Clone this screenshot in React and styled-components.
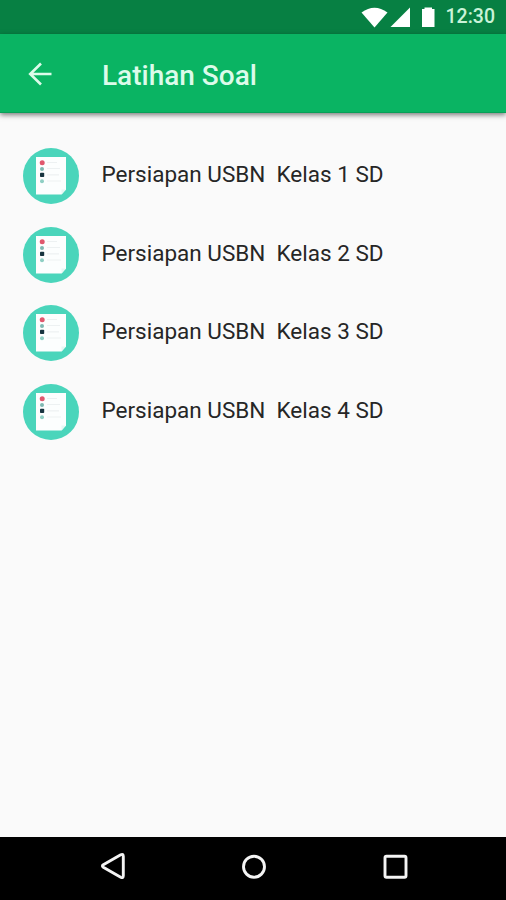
import React from "react";
import styled, { createGlobalStyle } from "styled-components";

const items = [
    "Persiapan USBN  Kelas 1 SD",
    "Persiapan USBN  Kelas 2 SD",
    "Persiapan USBN  Kelas 3 SD",
    "Persiapan USBN  Kelas 4 SD",
];

const NoteIcon = () => (
    <svg width="56" height="56" viewBox="0 0 56 56">
        <circle cx="28" cy="28" r="28" fill="#4ad5bb" />
        <path d="M13 9H43V41.500L38.500 46.500H13Z" fill="#fcfefe" />
        <path d="M43 41.500L38.500 46.500V41.500Z" fill="#e6f8f4" />
        <circle cx="19.200" cy="14.700" r="2.500" fill="#e0586e" />
        <circle cx="19" cy="20.900" r="2" fill="#7fb8b2" />
        <rect x="17" y="24.700" width="4.200" height="4.400" rx="0.800" fill="#17343f" />
        <circle cx="19" cy="33.300" r="2" fill="#8fcfc4" />
        <path d="M24 14.500H34M24 20.500H37M24 26.800H36M24 33H38" stroke="#edf1f2" strokeWidth="1.200" />
    </svg>
);

const App = () => {
    return (
        <>
            <GlobalStyle />
            <Screen>
                <StatusBar>
                    <svg width="76" height="34" viewBox="0 0 76 34" fill="#fff">
                        <path d="M0.500 12.500Q13.500 3 26.500 12.500L13.500 27.500Z" />
                        <path d="M49 7.500V27H29.500Z" />
                        <path d="M61 9H63.500V7.500H71V9H73.500V27H61Z" />
                    </svg>
                    <Clock>12:30</Clock>
                </StatusBar>

                <AppBar>
                    <BackButton aria-label="Kembali">
                        <svg width="24" height="24" viewBox="0 0 24 24" fill="none" stroke="#dcfbea" strokeWidth="2.600">
                            <path d="M23.500 12H2M13 1.500L2.200 12L13 22.500" />
                        </svg>
                    </BackButton>
                    <Title>Latihan Soal</Title>
                </AppBar>

                <List>
                    {items.map((item) => (
                        <Row key={item}>
                            <NoteIcon />
                            <RowText>{item}</RowText>
                        </Row>
                    ))}
                </List>

                <NavBar>
                    <NavButton aria-label="Back">
                        <svg width="28" height="28" viewBox="0 0 28 28">
                            <path d="M4.300 12.800L21.700 2.800Q24.300 1.500 24.300 4.500V23.500Q24.300 26.500 21.700 25.200L4.300 15.200Q2.500 14 4.300 12.800Z" />
                        </svg>
                    </NavButton>
                    <NavButton aria-label="Home">
                        <svg width="28" height="28" viewBox="0 0 28 28">
                            <circle cx="14" cy="14.700" r="10.500" />
                        </svg>
                    </NavButton>
                    <NavButton aria-label="Recent">
                        <svg width="28" height="28" viewBox="0 0 28 28">
                            <rect x="4" y="4.300" width="21" height="21" rx="1.500" />
                        </svg>
                    </NavButton>
                </NavBar>
            </Screen>
        </>
    );
};

export default App;

const GlobalStyle = createGlobalStyle`
    * {
        box-sizing: border-box;
    }
    body {
        margin: 0;
        font-family: Roboto, "Liberation Sans", sans-serif;
    }
    button {
        border: none;
        padding: 0;
        background: none;
    }
    svg {
        display: block;
        flex-shrink: 0;
    }
`;

const Screen = styled.div`
    display: flex;
    flex-direction: column;
    width: 506px;
    height: 900px;
    background: #fafafa;
    overflow: hidden;
`;

const StatusBar = styled.div`
    display: flex;
    align-items: center;
    justify-content: flex-end;
    height: 34px;
    padding-right: 11px;
    background: #078043;
`;

const Clock = styled.span`
    width: 50px;
    margin-left: 8px;
    color: #c9f3d8;
    font-size: 19.500px;
    font-weight: 500;
    line-height: 34px;
    text-align: right;
`;

const AppBar = styled.header`
    display: flex;
    align-items: center;
    height: 79px;
    padding: 2px 0 0 28px;
    background: #0ab463;
    border-bottom: 1px solid #08a058;
    box-shadow: 0 2px 5px rgba(0, 0, 0, 0.5);
`;

const BackButton = styled.button`
    width: 24px;
    height: 24px;
`;

const Title = styled.h1`
    margin: 0 0 0 50px;
    padding-top: 4px;
    color: #dcfbea;
    font-size: 28px;
    font-weight: 500;
    line-height: 32px;
`;

const List = styled.div`
    flex: 1;
    display: flex;
    flex-direction: column;
    gap: 22.700px;
    padding: 35px 23px 0;
`;

const Row = styled.div`
    display: flex;
    align-items: center;
    height: 56px;
`;

const RowText = styled.span`
    margin-left: 22.500px;
    padding-bottom: 4px;
    color: #262626;
    font-size: 22.500px;
    line-height: 28px;
    white-space: pre;
`;

const NavBar = styled.nav`
    display: flex;
    justify-content: space-between;
    height: 63px;
    padding: 15px 97px 0 99px;
    background: #000;
`;

const NavButton = styled.button`
    width: 28px;
    height: 28px;

    svg {
        fill: none;
        stroke: #f4f4f4;
        stroke-width: 2.900;
    }
`;
